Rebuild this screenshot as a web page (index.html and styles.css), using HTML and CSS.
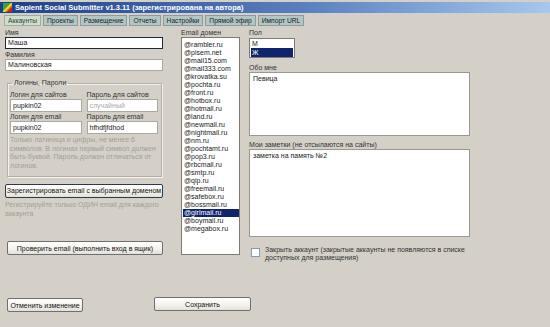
FILE: index.html
```html
<!DOCTYPE html>
<html lang="ru">
<head>
  <meta charset="UTF-8">
  <title>Sapient Social Submitter</title>
  <link rel="stylesheet" href="styles.css">
</head>
<body>
  <div class="window">
    <!-- Заголовок окна -->
    <div class="titlebar">
      <span class="app-icon"></span>
      <span class="title">Sapient Social Submitter v1.3.11 (зарегистрирована на автора)</span>
    </div>

    <!-- Вкладки -->
    <div class="tabs">
      <div class="tab active">Аккаунты</div>
      <div class="tab">Проекты</div>
      <div class="tab">Размещение</div>
      <div class="tab">Отчеты</div>
      <div class="tab">Настройки</div>
      <div class="tab">Прямой эфир</div>
      <div class="tab">Импорт URL</div>
    </div>

    <div class="content">
      <!-- Левая колонка -->
      <div class="col-left">
        <label class="lbl">Имя</label>
        <div class="field focused">Маша</div>
        <label class="lbl lbl-next">Фамилия</label>
        <div class="field">Малиновская</div>

        <fieldset class="group">
          <legend>Логины, Пароли</legend>
          <div class="pair">
            <div class="pair-item">
              <label class="lbl">Логин для сайтов</label>
              <div class="field">pupkin02</div>
            </div>
            <div class="pair-item">
              <label class="lbl">Пароль для сайтов</label>
              <div class="field placeholder">случайный</div>
            </div>
          </div>
          <div class="pair">
            <div class="pair-item">
              <label class="lbl">Логин для email</label>
              <div class="field">pupkin02</div>
            </div>
            <div class="pair-item">
              <label class="lbl">Пароль для email</label>
              <div class="field">hfhdfjfdhod</div>
            </div>
          </div>
          <p class="hint">Только латиница и цифры, не менее 6 символов. В логинах первый символ должен быть буквой. Пароль должен отличаться от логинов.</p>
        </fieldset>

        <button class="btn btn-register">Зарегистрировать email с выбранным доменом</button>
        <p class="hint hint-register">Регистрируйте только ОДИН email для каждого аккаунта</p>

        <button class="btn btn-check">Проверить email (выполнить вход в ящик)</button>
      </div>

      <!-- Средняя колонка -->
      <div class="col-mid">
        <label class="lbl">Email домен</label>
        <ul class="listbox domains">
          <li>@rambler.ru</li>
          <li>@pisem.net</li>
          <li>@mail15.com</li>
          <li>@mail333.com</li>
          <li>@krovatka.su</li>
          <li>@pochta.ru</li>
          <li>@front.ru</li>
          <li>@hotbox.ru</li>
          <li>@hotmail.ru</li>
          <li>@land.ru</li>
          <li>@newmail.ru</li>
          <li>@nightmail.ru</li>
          <li>@nm.ru</li>
          <li>@pochtamt.ru</li>
          <li>@pop3.ru</li>
          <li>@rbcmail.ru</li>
          <li>@smtp.ru</li>
          <li>@qip.ru</li>
          <li>@freemail.ru</li>
          <li>@safebox.ru</li>
          <li>@bossmail.ru</li>
          <li class="selected">@girlmail.ru</li>
          <li>@boymail.ru</li>
          <li>@megabox.ru</li>
        </ul>
      </div>

      <!-- Правая колонка -->
      <div class="col-right">
        <label class="lbl">Пол</label>
        <ul class="listbox gender">
          <li>М</li>
          <li class="selected">Ж</li>
        </ul>

        <label class="lbl lbl-about">Обо мне</label>
        <div class="memo memo-about">Певица</div>

        <label class="lbl lbl-notes">Мои заметки (не отсылаются на сайты)</label>
        <div class="memo memo-notes">заметка на память №2</div>

        <div class="check-row">
          <span class="checkbox"></span>
          <span class="check-text">Закрыть аккаунт (закрытые аккаунты не появляются в списке доступных для размещения)</span>
        </div>
      </div>
    </div>

    <!-- Нижние кнопки -->
    <div class="bottom">
      <button class="btn btn-cancel">Отменить изменение</button>
      <button class="btn btn-save">Сохранить</button>
    </div>
  </div>
</body>
</html>
```

FILE: styles.css
```css
body {
  margin: 0;
  font-family: 'Liberation Sans', Arial, sans-serif;
  font-size: 7px;
  color: #222;
  background: #d4d0c8;
}

.window {
  width: 550px;
  height: 327px;
  background: #d4d0c8;
  overflow: hidden;
}

/* Заголовок */
.titlebar {
  margin-top: 2px;
  height: 11px;
  display: flex;
  align-items: center;
  gap: 3px;
  padding-left: 3px;
  background: linear-gradient(to right, #1e3f86, #5a7fc0 55%, #a6c8ee);
}

.app-icon {
  width: 9px;
  height: 9px;
  background: linear-gradient(135deg, #3aa23a 0%, #3aa23a 40%, #f4e23a 50%, #e8b020 60%, #c8281c 75%, #c8281c 100%);
}

.title {
  color: #fff;
  font-weight: bold;
  font-size: 7.5px;
  line-height: 11px;
  white-space: nowrap;
}

/* Вкладки */
.tabs {
  display: flex;
  gap: 2px;
  padding: 2px 0 0 4px;
  height: 11px;
}

.tab {
  height: 9px;
  line-height: 9px;
  padding: 0 3px;
  font-size: 6.7px;
  border: 1px solid #8c9c9c;
  background: #b2c6c6;
  color: #222;
  white-space: nowrap;
}

.tab.active {
  background: #cfddcf;
  border-color: #a0aca0;
  color: #2c4a2c;
}

/* Основная область */
.content {
  display: flex;
  padding: 3px 0 0 5px;
  height: 255px;
}

.lbl {
  display: block;
  line-height: 8px;
  height: 8px;
  color: #333;
  white-space: nowrap;
}

.field {
  box-sizing: border-box;
  height: 12px;
  line-height: 10px;
  padding: 0 2px;
  background: #fff;
  border: 1px solid #aaa8a2;
  white-space: nowrap;
  overflow: hidden;
}

.field.focused {
  border-color: #1d2a38;
}

.field.placeholder {
  color: #a8a8a8;
}

.lbl-next {
  margin-top: 2px;
}

.col-left {
  width: 158px;
  display: flex;
  flex-direction: column;
}

.group {
  margin: 8px 0 0 2px;
  padding: 3px 3px 5px 2px;
  border: 1px solid #b4b0a8;
  box-shadow: 1px 1px 0 #f4f2ee, inset 1px 1px 0 #f4f2ee;
  width: 148px;
}

.group legend {
  padding: 0 2px;
  margin-left: 2px;
  line-height: 8px;
  color: #333;
}

.pair {
  display: flex;
  gap: 5px;
  margin-top: 1px;
}

.pair-item {
  flex: 1;
}

.pair .field {
  height: 13px;
  line-height: 11px;
}

.hint {
  margin: 2px 0 0 0;
  line-height: 8.7px;
  color: #a29e96;
}

.btn {
  font-family: 'Liberation Sans', Arial, sans-serif;
  font-size: 7px;
  color: #111;
  height: 14px;
  padding: 0;
  background: linear-gradient(#ffffff, #f2f1ec 60%, #e2e0da);
  border: 1px solid #6e6e6e;
  border-radius: 2px;
  white-space: nowrap;
}

.btn-register {
  margin-top: 7px;
  width: 158px;
  border-color: #2a3a4a;
}

.hint-register {
  margin-top: 3px;
}

.btn-check {
  margin: 23px 0 0 2px;
  width: 156px;
}

.col-mid {
  width: 59px;
  margin-left: 18px;
  display: flex;
  flex-direction: column;
}

.listbox {
  list-style: none;
  margin: 0;
  background: #fff;
  border: 1px solid #7e7b75;
  box-sizing: border-box;
}

.listbox li {
  white-space: nowrap;
}

.domains {
  height: 218px;
  padding: 3px 0 0 1px;
}

.domains li {
  line-height: 8px;
  height: 8px;
  padding-left: 1px;
}

.listbox li.selected {
  background: #0e246c;
  color: #fff;
}

.col-right {
  width: 221px;
  margin-left: 9px;
  display: flex;
  flex-direction: column;
}

.gender {
  width: 46px;
  height: 20px;
  padding: 0 1px;
  margin-top: 1px;
}

.gender li {
  line-height: 9px;
  height: 9px;
  padding-left: 1px;
}

.lbl-about {
  margin-top: 6px;
}

.memo {
  background: #fff;
  border: 1px solid #9a978f;
  box-sizing: border-box;
  padding: 2px 3px;
  line-height: 8px;
}

.memo-about {
  height: 64px;
}

.lbl-notes {
  margin-top: 5px;
}

.memo-notes {
  height: 88px;
}

.check-row {
  display: flex;
  align-items: flex-start;
  gap: 5px;
  margin-top: 9px;
  padding-left: 2px;
}

.checkbox {
  flex: none;
  width: 7px;
  height: 7px;
  margin-top: 2px;
  background: #fff;
  border: 1px solid #7f9db9;
}

.check-text {
  line-height: 8px;
  color: #333;
  width: 205px;
}

/* Нижняя панель */
.bottom {
  display: flex;
  align-items: flex-start;
  padding: 14px 0 0 7px;
  gap: 71px;
}

.btn-cancel {
  width: 76px;
}

.btn-save {
  width: 97px;
  margin-top: -1px;
}
```
